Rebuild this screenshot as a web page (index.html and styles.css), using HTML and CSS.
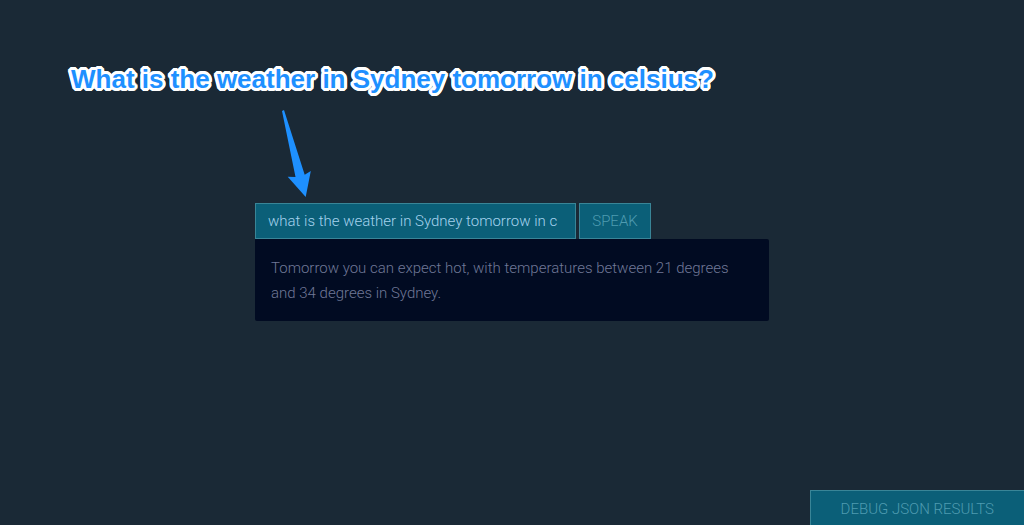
FILE: index.html
```html
<!DOCTYPE html>
<html lang="en">
<head>
<meta charset="utf-8">
<title>Weather assistant</title>
<meta name="viewport" content="width=device-width, initial-scale=1">
<link rel="stylesheet" href="styles.css">
</head>
<body>
<h1 class="callout">What is the weather in Sydney tomorrow in celsius?</h1>
<main class="assistant">
  <svg class="arrow" viewBox="0 0 29 87" width="29" height="87" aria-hidden="true">
    <path d="M0 1 L2 0 L22.7 64.7 L28.8 61 L23.7 87 L5.7 66.7 L13.5 67 Z" fill="#1e90ff"/>
  </svg>
  <form class="query">
    <input class="field" type="text" aria-label="Ask a question" value="what is the weather in Sydney tomorrow in c">
    <button class="btn" type="button">SPEAK</button>
  </form>
  <p class="response">Tomorrow you can expect hot, with temperatures between 21 degrees and 34 degrees in Sydney.</p>
</main>
<footer class="footer">
  <button class="btn debug" type="button">DEBUG JSON RESULTS</button>
</footer>
</body>
</html>
```
FILE: styles.css
```css
* {
  box-sizing: border-box;
}

body {
  display: flex;
  flex-direction: column;
  min-height: 100vh;
  margin: 0;
  overflow-x: hidden;
  background: #1a2936;
  color: #707897;
  font: 300 15px/25px Roboto, "Open Sans", sans-serif;
}

.callout {
  margin: 0;
  padding: 63px 71px 0;
  color: #1e90ff;
  font: bold 26px/32px "Liberation Sans", Arial, sans-serif;
  text-shadow:
    3px 0 #fff, -3px 0 #fff, 0 3px #fff, 0 -3px #fff,
    2px 2px #fff, -2px 2px #fff, 2px -2px #fff, -2px -2px #fff,
    3px 1px #fff, -3px 1px #fff, 3px -1px #fff, -3px -1px #fff,
    1px 3px #fff, -1px 3px #fff, 1px -3px #fff, -1px -3px #fff;
}

.assistant {
  position: relative;
  width: 514px;
  max-width: 100%;
  margin: 108px auto 0;
}

.arrow {
  position: absolute;
  left: 27px;
  top: -93px;
}

.query {
  display: flex;
  gap: 3px;
}

.field,
.btn {
  height: 36px;
  margin: 0;
  padding: 0 12px;
  border: 1px solid #398597;
  border-radius: 0;
  background: #0b5f78;
  font: inherit;
}

.field {
  width: 321px;
  color: #a5d3ee;
}

.btn {
  min-width: 72px;
  color: #4e9bb0;
}

.response {
  margin: 0;
  padding: 17px 16px 15px;
  border-radius: 0 2px 2px 2px;
  background: #010b22;
}

.footer {
  display: flex;
  justify-content: flex-end;
  margin-top: auto;
}

.debug {
  height: 35px;
  padding: 2px 30px 0;
  border-width: 1px 0 0 1px;
}
```
